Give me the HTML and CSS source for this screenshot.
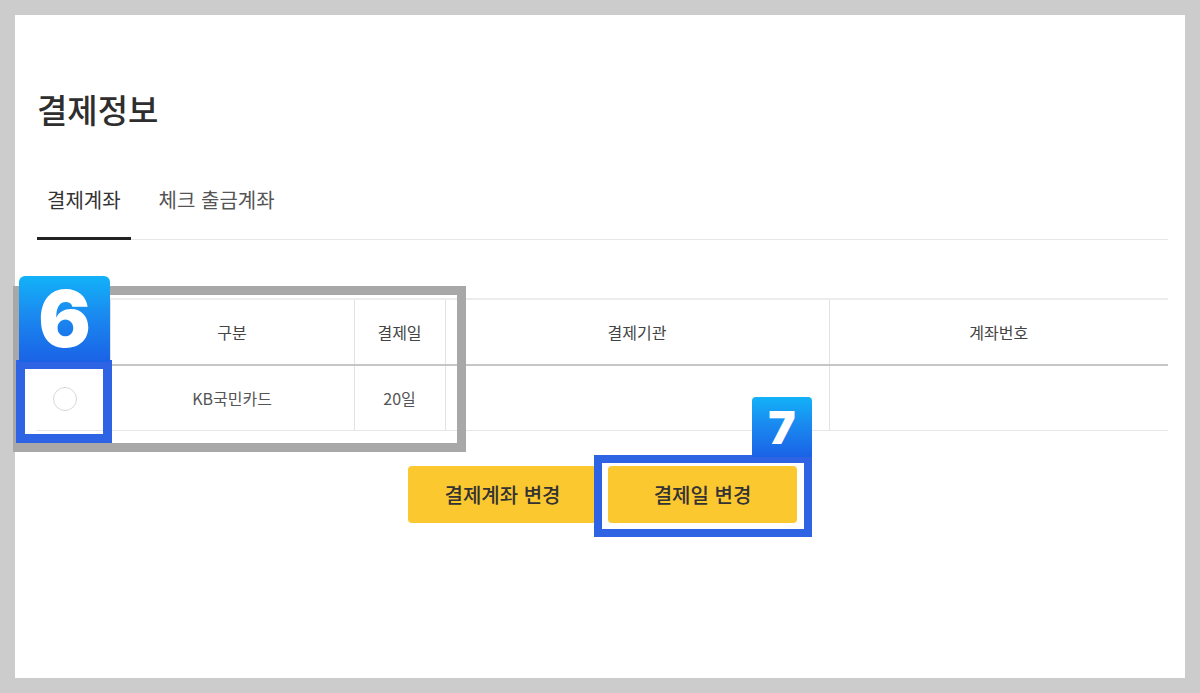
FILE: index.html
```html
<!DOCTYPE html>
<html lang="ko">
<head>
<meta charset="utf-8">
<title>결제정보</title>
<link rel="stylesheet" href="styles.css">
</head>
<body>
<div class="panel">
  <h1 class="title">결제정보</h1>
  <div class="tabs">
    <div class="tab active">결제계좌</div>
    <div class="tab">체크 출금계좌</div>
  </div>
  <table class="grid">
    <colgroup>
      <col class="c1"><col class="c2"><col class="c3"><col class="c4"><col class="c5">
    </colgroup>
    <thead>
      <tr><th></th><th>구분</th><th>결제일</th><th>결제기관</th><th>계좌번호</th></tr>
    </thead>
    <tbody>
      <tr><td class="pick"><span class="radio"></span></td><td>KB국민카드</td><td>20일</td><td></td><td></td></tr>
    </tbody>
  </table>
  <div class="actions">
    <button class="btn">결제계좌 변경</button>
    <button class="btn">결제일 변경</button>
  </div>

  <div class="mark gray-box"></div>
  <div class="mark blue-box box6"></div>
  <div class="mark badge badge6">6</div>
  <div class="mark blue-box box7"></div>
  <div class="mark badge badge7">7</div>
</div>
</body>
</html>
```

FILE: styles.css
```css
html, body {
  margin: 0;
  padding: 0;
}
body {
  background: #cccccc;
  padding: 15px;
  font-family: "Noto Sans CJK KR", "Noto Sans", sans-serif;
  color: #333;
}
.panel {
  position: relative;
  background: #fff;
  width: 1170px;
  height: 663px;
  box-sizing: border-box;
  padding: 0 17px 0 22px;
}
.title {
  margin: 0;
  padding-top: 73px;
  font-size: 33px;
  line-height: 42px;
  font-weight: 500;
  color: #2e2e2e;
}
.tabs {
  margin-top: 48px;
  display: flex;
  gap: 18px;
  border-bottom: 1px solid #e6e6e6;
}
.tab {
  padding: 9px 10px 24px;
  font-size: 20px;
  line-height: 26px;
  color: #555;
  border-bottom: 3px solid transparent;
  margin-bottom: -1px;
}
.tab.active {
  color: #333;
  border-bottom-color: #222;
}
.grid {
  margin-top: 58px;
  width: 100%;
  border-collapse: collapse;
  table-layout: fixed;
  border-top: 2px solid #ececec;
  font-size: 16px;
}
.c1 { width: 73px; }
.c2 { width: 244px; }
.c3 { width: 91px; }
.c4 { width: 384px; }
.c5 { width: auto; }
.grid th, .grid td {
  height: 64px;
  padding: 0;
  text-align: center;
  border-left: 1px solid #e2e2e2;
  color: #444;
  font-weight: 400;
}
.grid th:first-child, .grid td:first-child {
  border-left: none;
}
.grid thead th {
  border-bottom: 2px solid #c6c6c6;
}
.grid tbody td {
  border-bottom: 1px solid #e6e6e6;
  color: #555;
}
.grid td.pick {
  padding-right: 17px;
}
.radio {
  display: inline-block;
  width: 22px;
  height: 22px;
  border: 1px solid #d8d8d8;
  border-radius: 50%;
  vertical-align: middle;
}
.actions {
  margin-top: 35px;
  display: flex;
  justify-content: center;
  gap: 11px;
}
.btn {
  width: 189px;
  height: 57px;
  border: none;
  border-radius: 4px;
  background: #fcc830;
  color: #333;
  font-family: "Noto Sans CJK KR", "Noto Sans", sans-serif;
  font-size: 20px;
  font-weight: 500;
}

/* annotation overlays */
.mark {
  position: absolute;
  box-sizing: border-box;
}
.gray-box {
  left: -2px;
  top: 271px;
  width: 453px;
  height: 166px;
  border: 9px solid #a8a8a8;
}
.blue-box {
  border: 9px solid #2e63e4;
}
.box6 {
  left: 1px;
  top: 345px;
  width: 96px;
  height: 83px;
}
.box7 {
  left: 579px;
  top: 440px;
  width: 218px;
  height: 82px;
  border-width: 8px;
}
.badge {
  background: linear-gradient(180deg, #12b2f8 0%, #1a8af0 45%, #1a62e6 100%);
  color: #fff;
  font-family: "Inter", "Roboto", sans-serif;
  font-weight: 900;
  display: flex;
  align-items: center;
  justify-content: center;
  border-radius: 6px 6px 0 0;
}
.badge6 {
  left: 4px;
  top: 261px;
  width: 91px;
  height: 86px;
  font-size: 78px;
  line-height: 1;
}
.badge7 {
  left: 737px;
  top: 382px;
  width: 60px;
  height: 60px;
  font-size: 46px;
  line-height: 1;
  border-radius: 4px 4px 0 0;
}
```
